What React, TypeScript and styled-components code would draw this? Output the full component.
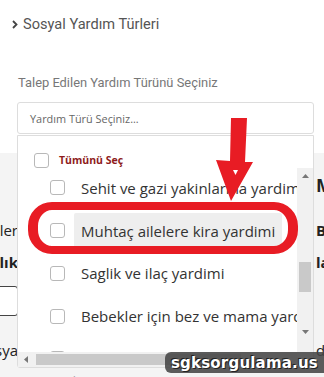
import React from "react";
import styled, { createGlobalStyle } from "styled-components";

const GlobalStyle = createGlobalStyle`
  html, body { margin: 0; padding: 0; background: #ffffff; }
  * { box-sizing: border-box; }
`;

const Page = styled.div`
  position: relative;
  width: 324px;
  height: 377px;
  overflow: hidden;
  font-family: "Open Sans", "Noto Sans", sans-serif;
`;

const TopSection = styled.section`
  height: 153px;
  background: #ffffff;
  padding: 14px 0 0 12px;
`;

const Header = styled.div`
  display: flex;
  align-items: center;
  gap: 5px;
  height: 20px;
  font-family: Roboto, "Liberation Sans", sans-serif;
  font-size: 14.6px;
  color: #555555;
`;

const Label = styled.div`
  margin: 40px 0 0 6px;
  height: 18px;
  line-height: 18px;
  font-family: Roboto, "Liberation Sans", sans-serif;
  font-size: 12.9px;
  color: #777777;
`;

const SelectBox = styled.div`
  margin: 10px 0 0 5px;
  width: 297px;
  height: 32px;
  border: 1px solid #dddddd;
  border-radius: 3px;
  padding-left: 12px;
  display: flex;
  align-items: center;
  font-size: 10.9px;
  color: #666666;
`;

const BottomSection = styled.section`
  height: 224px;
  background: #f4f4f4;
  display: flex;
  flex-direction: column;
`;

const BgRow = styled.div<{ $top: number; $h: number }>`
  margin-top: ${(p) => p.$top}px;
  height: ${(p) => p.$h}px;
  display: flex;
  align-items: center;
  color: #222222;
  font-size: 15px;
`;

const LeftCell = styled.div<{ $bold?: boolean }>`
  width: 18px;
  overflow: hidden;
  display: flex;
  justify-content: flex-end;
  white-space: nowrap;
  font-weight: ${(p) => (p.$bold ? 700 : 400)};
`;

const RightCell = styled.div<{ $bold?: boolean; $size?: number }>`
  margin-left: auto;
  width: 8px;
  overflow: hidden;
  white-space: nowrap;
  font-weight: ${(p) => (p.$bold ? 700 : 400)};
  font-size: ${(p) => p.$size ?? 15}px;
`;

const BgInput = styled.div`
  margin-left: -30px;
  width: 36px;
  height: 30px;
  border: 1px solid #444;
  border-radius: 3px;
  background: #fff;
`;

const BottomText = styled.div`
  margin-top: 14px;
  padding-left: 60px;
  white-space: nowrap;
  font-size: 15px;
  color: #222;
`;

const Dropdown = styled.div`
  position: absolute;
  left: 17px;
  top: 135px;
  width: 297px;
  height: 233px;
  background: #ffffff;
  border: 1px solid #dddddd;
  border-radius: 0 0 3px 3px;
  display: flex;
  flex-direction: column;
`;

const SelectAllRow = styled.div`
  height: 32px;
  padding: 16px 0 0 16px;
  display: flex;
  align-items: center;
  gap: 10px;
`;

const Checkbox = styled.span`
  flex: none;
  width: 15px;
  height: 15px;
  border: 1px solid #b8b8b8;
  border-radius: 3px;
  background: #fff;
`;

const SelectAllText = styled.span`
  font-family: "Open Sans", sans-serif;
  font-size: 10.5px;
  font-weight: 700;
  color: #8e1b1b;
`;

const ListArea = styled.div`
  display: flex;
  height: 184px;
`;

const ListViewport = styled.div`
  flex: 1;
  overflow: hidden;
`;

const ListInner = styled.div`
  margin-top: -1.4px;
`;

const Item = styled.div`
  height: 42.7px;
  padding-left: 32px;
  display: flex;
  align-items: center;
  gap: 9px;
`;

const ItemLabel = styled.span<{ $active?: boolean }>`
  height: 36px;
  line-height: 36px;
  padding: 0 7px;
  border-radius: 2px;
  white-space: nowrap;
  font-size: 15px;
  color: #333333;
  background: ${(p) => (p.$active ? "#eeeeee" : "transparent")};
`;

const VScroll = styled.div`
  width: 16px;
  background: #f1f1f1;
  display: flex;
  flex-direction: column;
  align-items: center;
  padding: 6px 0;
`;

const Thumb = styled.div<{ $w: number; $h: number }>`
  width: ${(p) => p.$w}px;
  height: ${(p) => p.$h}px;
  background: #c9c9c9;
`;

const VSpacer = styled.div<{ $h: number }>`
  height: ${(p) => p.$h}px;
  flex: none;
`;

const HScroll = styled.div`
  height: 15px;
  width: 279px;
  background: #f1f1f1;
  display: flex;
  align-items: center;
  padding-left: 6px;
  gap: 8px;
`;

const Ring = styled.div`
  position: absolute;
  left: 28px;
  top: 202px;
  width: 270px;
  height: 52px;
  border: 8px solid #e81c24;
  border-left-width: 10px;
  border-right-width: 10px;
  border-radius: 24px;
`;

const ArrowSvg = styled.svg`
  position: absolute;
  left: 210px;
  top: 110px;
`;

const Watermark = styled.div`
  position: absolute;
  right: 0;
  top: 352px;
  width: 159px;
  height: 21px;
  border-radius: 6px 0 0 6px;
  background: rgba(70, 70, 70, 0.88);
  display: flex;
  align-items: center;
  justify-content: center;
  font-family: "DejaVu Sans", Verdana, sans-serif;
  font-weight: 700;
  font-size: 15px;
  color: #ffffff;
  letter-spacing: 0.2px;
  text-shadow: 1px 1px 0 #222, -1px -1px 0 #222;
`;

const Chevron = () => (
  <svg width="6" height="9" viewBox="0 0 6 9">
    <path d="M1 1 L4.5 4.5 L1 8" stroke="#444" strokeWidth="1.8" fill="none" />
  </svg>
);

const Tri = ({ dir }: { dir: "up" | "down" | "left" }) => {
  const pts =
    dir === "up" ? "0,4 3.5,0 7,4" : dir === "down" ? "0,0 7,0 3.5,4" : "4,0 4,7 0,3.5";
  const w = dir === "left" ? 4 : 7;
  const h = dir === "left" ? 7 : 4;
  return (
    <svg width={w} height={h} viewBox={`0 0 ${w} ${h}`}>
      <polygon points={pts} fill="#777" />
    </svg>
  );
};

const items = [
  "Sehit ve gazi yakinlarina yardimi",
  "Muhtaç ailelere kira yardimi",
  "Saglik ve ilaç yardimi",
  "Bebekler için bez ve mama yardimi",
  "Engelli vatandaslara yardim",
];

export default function App() {
  return (
    <Page>
      <GlobalStyle />
      <TopSection>
        <Header>
          <Chevron />
          <span>Sosyal Yardım Türleri</span>
        </Header>
        <Label>Talep Edilen Yardım Türünü Seçiniz</Label>
        <SelectBox>Yardım Türü Seçiniz...</SelectBox>
      </TopSection>
      <BottomSection>
        <BgRow $top={22} $h={20}>
          <LeftCell />
          <RightCell $bold $size={18}>Miktar</RightCell>
        </BgRow>
        <BgRow $top={25} $h={20}>
          <LeftCell>Aileler</LeftCell>
          <RightCell $bold>Belge</RightCell>
        </BgRow>
        <BgRow $top={12} $h={20}>
          <LeftCell $bold>Sağlık</LeftCell>
          <RightCell $bold>lar</RightCell>
        </BgRow>
        <BgRow $top={14} $h={30}>
          <LeftCell>
            <BgInput />
          </LeftCell>
        </BgRow>
        <BgRow $top={24} $h={20}>
          <LeftCell>Sosya</LeftCell>
          <RightCell>da</RightCell>
        </BgRow>
        <BottomText>a İstek / Bakanlık tarafından onaylanmış</BottomText>
      </BottomSection>

      <Dropdown>
        <SelectAllRow>
          <Checkbox />
          <SelectAllText>Tümünü Seç</SelectAllText>
        </SelectAllRow>
        <ListArea>
          <ListViewport>
            <ListInner>
              {items.map((t, i) => (
                <Item key={t}>
                  <Checkbox />
                  <ItemLabel $active={i === 1}>{t}</ItemLabel>
                </Item>
              ))}
            </ListInner>
          </ListViewport>
          <VScroll>
            <Tri dir="up" />
            <VSpacer $h={84} />
            <Thumb $w={12} $h={30} />
            <VSpacer $h={38} />
            <Tri dir="down" />
          </VScroll>
        </ListArea>
        <HScroll>
          <Tri dir="left" />
          <Thumb $w={205} $h={11} />
        </HScroll>
      </Dropdown>

      <Ring />
      <ArrowSvg width="50" height="100" viewBox="0 0 50 100">
        <polygon
          points="21,8 37,8 35,52 43,52 21,91 6,50 20,51"
          fill="#e81c24"
        />
        <polygon points="23,60 28,60 25.5,65" fill="#ffffff" />
      </ArrowSvg>
      <Watermark>sgksorgulama.us</Watermark>
    </Page>
  );
}
